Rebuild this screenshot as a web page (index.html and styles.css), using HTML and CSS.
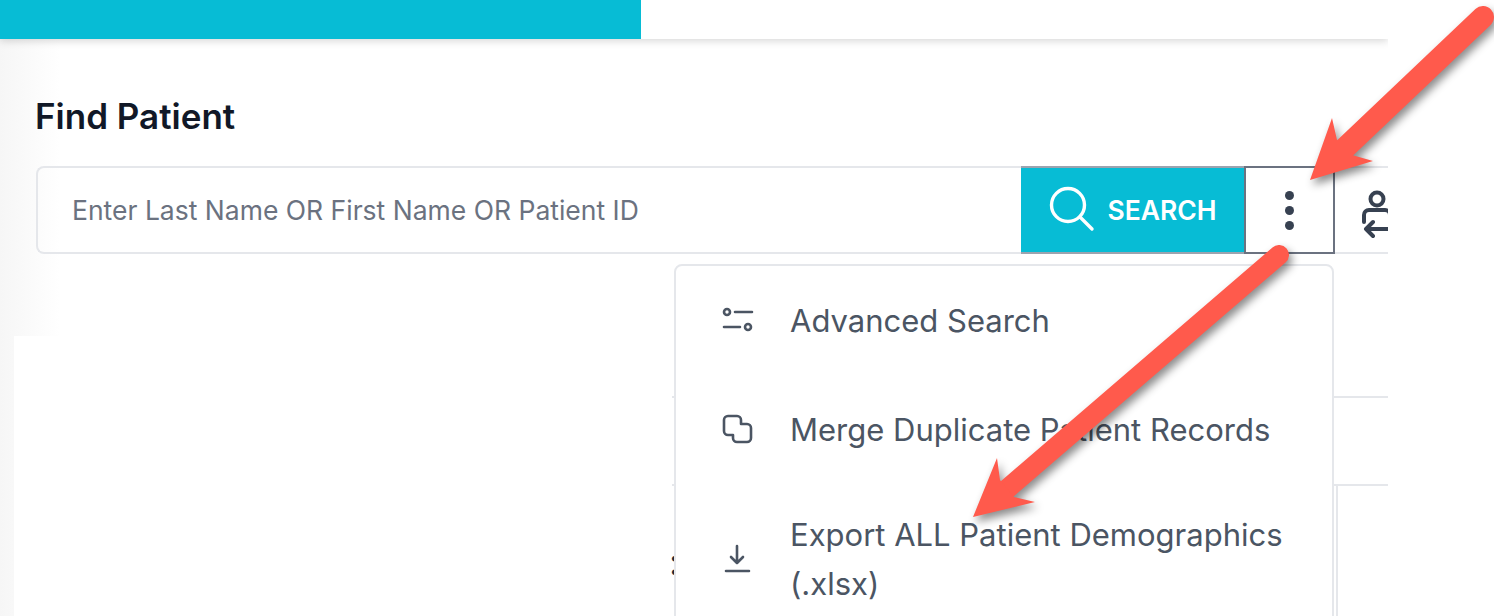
FILE: index.html
```html
<!DOCTYPE html>
<html lang="en">
<head>
    <meta charset="UTF-8">
    <title>Find Patient</title>
    <link rel="stylesheet" href="styles.css">
</head>
<body>
    <div class="page">
        <div class="topbar"><div class="progress"></div></div>

        <div class="search-panel">
            <h1>Find Patient</h1>
            <div class="search-row">
                <input class="search-input" type="text" placeholder="Enter Last Name OR First Name OR Patient ID">
                <button class="search-btn">
                    <svg width="48" height="50" viewBox="0 0 48 50" fill="none" stroke="#fff" stroke-width="3.4" stroke-linecap="round">
                        <circle cx="20" cy="20" r="16.5"/>
                        <path d="M32 32 L44 44"/>
                    </svg>
                    SEARCH
                </button>
                <button class="more-btn"><span></span><span></span><span></span></button>
                <div class="switch-cell">
                    <svg width="36" height="56" viewBox="0 0 36 56" fill="none" stroke="#374151" stroke-width="4" stroke-linecap="round" stroke-linejoin="round">
                        <circle cx="19" cy="11" r="6.5"/>
                        <path d="M6 34 v-7 a5 5 0 0 1 5 -5 h16 a5 5 0 0 1 5 5 v7"/>
                        <path d="M36 41 H8 M15 34 l-7 7 7 7"/>
                    </svg>
                </div>
            </div>
        </div>

        <div class="results">
            <div class="result-row"></div>
            <div class="result-row last"><span class="colon">:</span><div class="result-cell"></div></div>
        </div>

        <div class="menu">
            <div class="menu-item">
                <svg class="menu-icon" width="34" height="34" viewBox="0 0 34 34">
                    <circle cx="7" cy="9" r="3"/>
                    <path d="M15 9 H32 M4 24 H20"/>
                    <circle cx="28" cy="24" r="3"/>
                </svg>
                <span>Advanced Search</span>
            </div>
            <div class="menu-item">
                <svg class="menu-icon" width="34" height="34" viewBox="0 0 34 34">
                    <path d="M8 4 h9 a4 4 0 0 1 4 4 v4 h6 a4 4 0 0 1 4 4 v10 a4 4 0 0 1 -4 4 h-10 a4 4 0 0 1 -4 -4 v-3 h-5 a4 4 0 0 1 -4 -4 V8 a4 4 0 0 1 4 -4 z"/>
                </svg>
                <span>Merge Duplicate Patient Records</span>
            </div>
            <div class="menu-item">
                <svg class="menu-icon" width="34" height="34" viewBox="0 0 34 34">
                    <path d="M17 4 V21 M11 15 l6 6 6 -6 M6 29 H29"/>
                </svg>
                <span>Export ALL Patient Demographics (.xlsx)</span>
            </div>
        </div>
    </div>

    <!-- annotation arrows drawn over the screenshot -->
    <svg class="arrows" width="1494" height="616" viewBox="0 0 1494 616">
        <g class="arrow">
            <path class="shaft" d="M1483 17 L1345 148"/>
            <polygon points="1310,180 1332,118 1337,140 1352,155 1373,161"/>
        </g>
        <g class="arrow">
            <path class="shaft thin" d="M1279 255 L1007 489"/>
            <polygon points="973,517 997,458 1000,480 1014,497 1035,502"/>
        </g>
    </svg>
</body>
</html>
```

FILE: styles.css
```css
* {box-sizing: border-box;}
html, body {margin: 0; height: 616px; overflow: hidden;}
body {font-family: Inter, "Liberation Sans", sans-serif; background: #fff; position: relative;}
.page {width: 1388px; height: 616px; overflow: hidden; position: relative; background: linear-gradient(to right, #f6f6f6, #fff 60px);}

.topbar {height: 39px; background: #fff; box-shadow: 0 2px 8px rgba(0,0,0,.16); position: relative;}
.progress {width: 641px; height: 39px; background: #07bcd5;}

.search-panel {height: 297px; padding: 57px 0 0 36px;}
h1 {margin: 0 0 30px -1px; font-size: 35px; line-height: 40px; font-weight: 600; color: #111827;}

.search-row {display: flex; height: 88px;}
.search-input {flex: 1; min-width: 0; height: 88px; padding: 0 0 0 34px; border: 2px solid #e5e7eb; border-right: 0; border-radius: 8px 0 0 8px; outline: 0; background: transparent; font-family: inherit; font-size: 26.5px; color: #374151;}
.search-input::placeholder {color: #6b7280; opacity: 1;}
.search-btn {width: 223px; height: 88px; display: flex; align-items: center; justify-content: center; gap: 11px; padding: 0; border: 0; border-top: 2px solid #9ca3af; border-bottom: 2px solid #9ca3af; background: #07bcd5; color: #fff; font-family: inherit; font-size: 26.5px; font-weight: 600;}
.more-btn {width: 91px; height: 88px; display: flex; flex-direction: column; align-items: center; justify-content: center; gap: 6px; padding: 0; border: 2px solid #6b7280; background: #fff;}
.more-btn span {width: 9px; height: 9px; border-radius: 50%; background: #374151;}
.switch-cell {width: 53px; overflow: hidden; padding: 20px 0 0 23px; border-top: 2px solid #e5e7eb; border-bottom: 2px solid #e5e7eb;}

.results {margin-left: 14px; height: 280px; padding: 60px 0 0 658px; background: #fff;}
.result-row {height: 88px; border-top: 2px solid #e5e7eb;}
.result-row.last {display: flex; height: 132px; border-top: 2px solid #e5e7eb;}
.colon {font-size: 36px; line-height: 36px; font-weight: 600; color: #1f2937; margin: 58px 0 0 -3px; width: 9px; flex: none;}
.result-cell {margin-left: 658px; width: 60px; border-left: 2px solid #e5e7eb;}

.menu {position: absolute; left: 674px; top: 264px; width: 660px; height: 380px; background: #fff; border: 2px solid #e5e7eb; border-radius: 8px;}
.menu-item {display: flex; align-items: center; gap: 36px; min-height: 110px; padding: 26px 44px; font-size: 31px; line-height: 49px; color: #4b5563;}
.menu-item:first-child {min-height: 108px; padding: 0 44px;}
.menu-icon {flex: none; fill: none; stroke: #4b5563; stroke-width: 2.6; stroke-linecap: round; stroke-linejoin: round;}

.arrows {position: absolute; left: 0; top: 0;}
.arrow {filter: drop-shadow(3px 5px 4px rgba(0,0,0,.45));}
.arrow polygon {fill: #ff5a4c;}
.shaft {fill: none; stroke: #ff5a4c; stroke-width: 22; stroke-linecap: round;}
.shaft.thin {stroke-width: 20;}
```
